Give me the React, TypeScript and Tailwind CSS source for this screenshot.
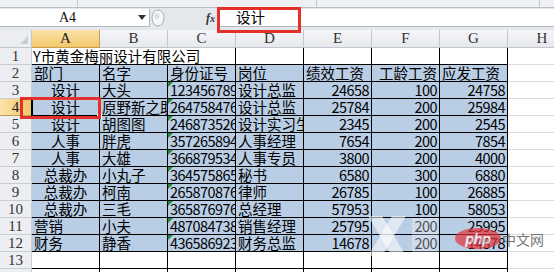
import React from "react";

type Cell = { t: string; a?: "l" | "c" | "r"; n?: boolean; g?: boolean };

const ID = (s: string): Cell => ({ t: s, n: true, g: true });

const rows: Cell[][] = [
  [{ t: "部门" }, { t: "名字" }, { t: "身份证号" }, { t: "岗位" }, { t: "绩效工资" }, { t: "工龄工资", a: "r" }, { t: "应发工资" }],
  [{ t: "设计", a: "c" }, { t: "大头" }, ID("1234567890"), { t: "设计总监" }, { t: "24658", a: "r", n: true }, { t: "100", a: "r", n: true }, { t: "24758", a: "r", n: true }],
  [{ t: "设计", a: "c" }, { t: "原野新之助" }, ID("2647584760"), { t: "设计总监" }, { t: "25784", a: "r", n: true }, { t: "200", a: "r", n: true }, { t: "25984", a: "r", n: true }],
  [{ t: "设计", a: "c" }, { t: "胡图图" }, ID("2468735260"), { t: "设计实习生" }, { t: "2345", a: "r", n: true }, { t: "200", a: "r", n: true }, { t: "2545", a: "r", n: true }],
  [{ t: "人事", a: "c" }, { t: "胖虎" }, ID("3572658940"), { t: "人事经理" }, { t: "7654", a: "r", n: true }, { t: "200", a: "r", n: true }, { t: "7854", a: "r", n: true }],
  [{ t: "人事", a: "c" }, { t: "大雄" }, ID("3668795340"), { t: "人事专员" }, { t: "3800", a: "r", n: true }, { t: "200", a: "r", n: true }, { t: "4000", a: "r", n: true }],
  [{ t: "总裁办", a: "c" }, { t: "小丸子" }, ID("3645758650"), { t: "秘书" }, { t: "6580", a: "r", n: true }, { t: "300", a: "r", n: true }, { t: "6880", a: "r", n: true }],
  [{ t: "总裁办", a: "c" }, { t: "柯南" }, ID("2658708760"), { t: "律师" }, { t: "26785", a: "r", n: true }, { t: "100", a: "r", n: true }, { t: "26885", a: "r", n: true }],
  [{ t: "总裁办", a: "c" }, { t: "三毛" }, ID("3658769760"), { t: "总经理" }, { t: "57953", a: "r", n: true }, { t: "100", a: "r", n: true }, { t: "58053", a: "r", n: true }],
  [{ t: "营销" }, { t: "小夫" }, ID("4870847380"), { t: "销售经理" }, { t: "25795", a: "r", n: true }, { t: "200", a: "r", n: true }, { t: "25995", a: "r", n: true }],
  [{ t: "财务" }, { t: "静香" }, ID("4365869230"), { t: "财务总监" }, { t: "14678", a: "r", n: true }, { t: "200", a: "r", n: true }, { t: "14878", a: "r", n: true }],
];

const COLS = ["A", "B", "C", "D", "E", "F", "G"];

function RowHead({ n, active }: { n: number; active?: boolean }) {
  return (
    <div
      className={
        active
          ? "w-[32px] shrink-0 h-full flex items-center justify-center bg-gradient-to-r from-[#fbe3a8] to-[#f4c766] border-r border-b border-[#c79f4b] text-[#222] text-[15px] font-['Liberation_Serif',serif]"
          : "w-[32px] shrink-0 h-full flex items-center justify-center bg-[#eceef1] border-r border-b border-[#c9cdd3] text-[#333] text-[15px] font-['Liberation_Serif',serif]"
      }
    >
      {n}
    </div>
  );
}

function DataCell({ c, fill }: { c?: Cell; fill?: boolean }) {
  const base =
    "relative w-[68px] shrink-0 h-full border-r border-b border-black overflow-hidden whitespace-nowrap text-black text-[14.5px] leading-[16px] font-['Noto_Sans_CJK_SC',sans-serif] flex items-center";
  const bg = fill ? " bg-[#b9cde5]" : " bg-white";
  const align = !c || !c.a || c.a === "l" ? " justify-start pl-[2px]" : c.a === "c" ? " justify-center" : " justify-end pr-[2px]";
  return (
    <div className={base + bg + align}>
      {c?.g && (
        <div className="absolute left-0 top-0 w-0 h-0 border-t-[5px] border-t-[#1e8c3a] border-r-[5px] border-r-transparent" />
      )}
      {c && <span className={c.n ? "tracking-[-0.55px]" : ""}>{c.t}</span>}
    </div>
  );
}

function HCell() {
  return <div className="flex-1 h-full border-b border-[#d8dbe0] bg-white" />;
}

export default function App() {
  return (
    <div className="relative w-[554px] h-[272px] overflow-hidden bg-white select-none">
      {/* ribbon bottom strip */}
      <div className="h-[8px] flex bg-[#eef0f3] border-b border-[#b8bdc5]">
        <div className="w-[78px] border-r border-[#c3c8cf]" />
        <div className="w-[239px] border-r border-[#c3c8cf]" />
        <div className="w-[223px] border-r border-[#c3c8cf]" />
        <div className="flex-1" />
      </div>

      {/* formula bar */}
      <div className="h-[22px] flex items-start bg-[#e4e7eb] pt-[1px]">
        <div className="w-[150px] h-[18px] bg-white border-r border-b border-[#b3b9c1] flex items-center">
          <div className="w-[135px] text-center text-[14px] text-[#111] font-['Liberation_Serif',serif] leading-none">A4</div>
          <svg width="8" height="5" viewBox="0 0 8 5" className="ml-[3px]">
            <path d="M0 0 L8 0 L4 5 Z" fill="#333" />
          </svg>
        </div>
        <div className="w-[67px] h-[18px] flex items-center">
          <svg width="14" height="18" viewBox="0 0 14 18" className="ml-[1px]">
            <ellipse cx="7" cy="9" rx="6" ry="8" fill="#f6f7f9" stroke="#a9afb8" strokeWidth="1" />
            <ellipse cx="6" cy="7" rx="2.5" ry="3" fill="#dde1e6" />
          </svg>
          <span className="ml-[41px] text-[12px] italic font-bold text-[#333] font-['Liberation_Serif',serif] leading-none">
            f<span className="text-[10px]">x</span>
          </span>
        </div>
        <div className="flex-1 h-[18px] bg-white border-l border-b border-[#b3b9c1] flex items-center pl-[18px] text-[14.5px] text-black font-['Noto_Sans_CJK_SC',sans-serif] leading-none">
          设计
        </div>
      </div>

      {/* column headers */}
      <div className="h-[18px] flex">
        <div className="relative w-[32px] shrink-0 h-full bg-[#eceef1] border-r border-b border-[#c2c6cc]">
          <div className="absolute right-[3px] bottom-[3px] w-0 h-0 border-b-[8px] border-b-[#c9cdd3] border-l-[8px] border-l-transparent" />
        </div>
        {COLS.map((c) => (
          <div
            key={c}
            className={
              c === "A"
                ? "w-[68px] shrink-0 h-full flex items-center justify-center bg-gradient-to-b from-[#fbe2a6] to-[#f3c76a] border-r border-b border-[#c79f4b] text-[#222] text-[15px] font-['Liberation_Serif',serif]"
                : "w-[68px] shrink-0 h-full flex items-center justify-center bg-gradient-to-b from-[#f5f6f8] to-[#e6e8ec] border-r border-b border-[#c2c6cc] text-[#333] text-[15px] font-['Liberation_Serif',serif]"
            }
          >
            {c}
          </div>
        ))}
        <div className="w-[68px] shrink-0 h-full flex items-center justify-center bg-gradient-to-b from-[#f5f6f8] to-[#e6e8ec] border-b border-[#c2c6cc] text-[#333] text-[15px] font-['Liberation_Serif',serif]">
          H
        </div>
      </div>

      {/* row 1 */}
      <div className="h-[17px] flex">
        <RowHead n={1} />
        <div className="relative w-[204px] shrink-0 h-full border-r border-b border-black bg-white flex items-center pl-[1px] whitespace-nowrap text-black text-[14.5px] leading-[16px] font-['Noto_Sans_CJK_SC',sans-serif]">
          Y市黄金梅丽设计有限公司
        </div>
        <DataCell />
        <DataCell />
        <DataCell />
        <DataCell />
        <HCell />
      </div>

      {/* rows 2-12 */}
      {rows.map((r, i) => (
        <div key={i} className="h-[17px] flex">
          <RowHead n={i + 2} active={i + 2 === 4} />
          {r.map((c, j) => (
            <DataCell key={j} c={c} fill />
          ))}
          <HCell />
        </div>
      ))}

      {/* rows 13-14 */}
      {[13, 14].map((n) => (
        <div key={n} className="h-[17px] flex">
          <RowHead n={n} />
          {COLS.map((c) => (
            <DataCell key={c} />
          ))}
          <HCell />
        </div>
      ))}

      {/* active cell A4 */}
      <div className="absolute left-[31px] top-[98px] w-[70px] h-[19px] border-2 border-black pointer-events-none" />
      <div className="absolute left-[97px] top-[114px] w-[5px] h-[5px] bg-black border border-white pointer-events-none" />

      {/* red annotation boxes */}
      <div className="absolute left-[217px] top-[7px] w-[84px] h-[26px] border-[3px] border-[#e3302b] pointer-events-none" />
      <div className="absolute left-[20px] top-[97px] w-[81px] h-[22px] border-[3px] border-[#e3302b] pointer-events-none" />

      {/* watermark */}
      <svg className="absolute left-[362px] top-[210px] pointer-events-none" width="90" height="56" viewBox="0 0 90 56">
        <path d="M6 6 L20 6 L44 46 L30 46 Z" fill="#ffffff" opacity="0.55" />
        <path d="M44 6 L30 6 L6 46 L20 46 Z" fill="#ffffff" opacity="0.55" />
        <rect x="50" y="8" width="26" height="36" fill="#ffffff" opacity="0.3" />
      </svg>
      <div className="absolute left-[455px] top-[228px] w-[46px] h-[21px] rounded-[50%] bg-[#e5323a] opacity-70 flex items-center justify-center pointer-events-none">
        <span className="text-white italic font-bold text-[14px] leading-none font-['Liberation_Sans',sans-serif]">php</span>
      </div>
      <div className="absolute left-[502px] top-[232px] text-[14px] leading-none text-[#555] opacity-80 font-['Noto_Sans_CJK_SC',sans-serif] pointer-events-none">
        中文网
      </div>
    </div>
  );
}
